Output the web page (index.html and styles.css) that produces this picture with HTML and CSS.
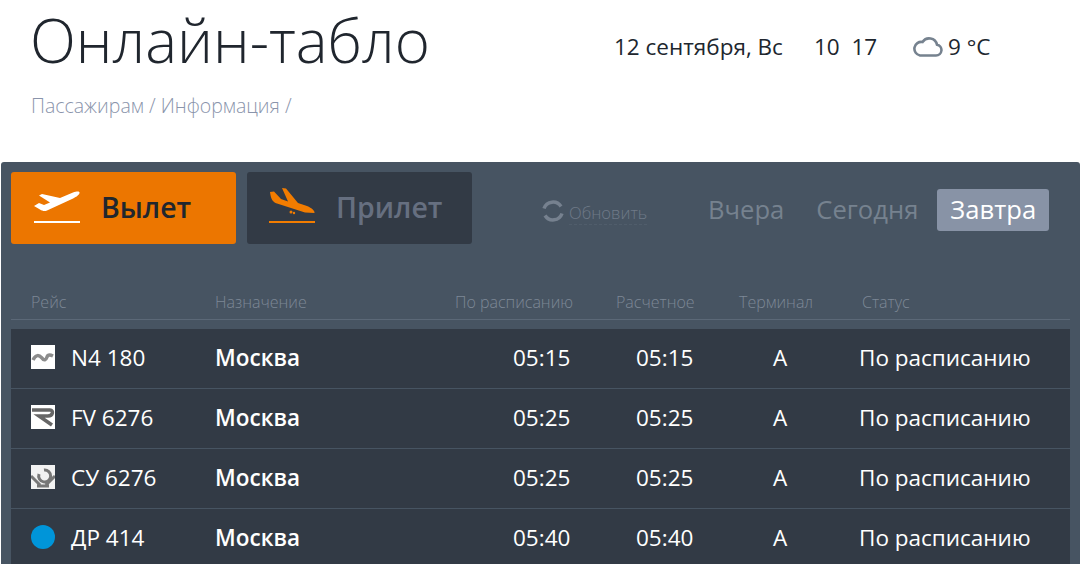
FILE: index.html
```html
<!DOCTYPE html>
<html lang="ru">
<head>
<meta charset="utf-8">
<title>Онлайн-табло</title>
<link rel="stylesheet" href="styles.css">
</head>
<body>
<header class="top">
  <div class="top-row">
    <h1 class="title">Онлайн-табло</h1>
    <div class="info">
      <span class="date">12 сентября, Вс</span>
      <span class="clock">10&nbsp;&nbsp;17</span>
      <span class="weather">
        <svg class="cloud" width="30" height="22" viewBox="0 0 30 22"><path d="M7 20.500H23a5.500 5.500 0 0 0 1-10.900A8 8 0 0 0 9.500 7 6.800 6.800 0 0 0 7 20.500z" fill="none" stroke="#76828f" stroke-width="2.600"/></svg>
        9 °C
      </span>
    </div>
  </div>
  <nav class="crumbs">Пассажирам / Информация /</nav>
</header>
<main class="board">
  <div class="toolbar">
    <a class="tab tab-on">
      <svg class="plane" width="46" height="40" viewBox="0 0 46 40"><path d="M0 18L5 15 10 17 16 14.500 5 7.500 8 6 26 10 39 4.500C43 3 46 3 45.500 5 45 7.500 41 9.500 38 11L13 22.500C11 23.500 8 23 6 21.500Z" fill="#fff"/><rect y="33" width="46" height="2" fill="#fff"/></svg>
      <span>Вылет</span>
    </a>
    <a class="tab tab-off">
      <svg class="plane" width="46" height="40" viewBox="0 0 46 40"><path d="M1 4L5 3.500 12 11 19 13.500 13 0 17 .5 29 15 38 18C43 20 46 23 45.500 25L36 24.500 8 15.500C4 14 2 12 1 4Z" fill="#f27c00"/><circle cx="22" cy="24" r="1.500" fill="#f27c00"/><circle cx="25" cy="25" r="1.200" fill="#f27c00"/><rect y="33" width="46" height="2" fill="#f27c00"/></svg>
      <span>Прилет</span>
    </a>
    <a class="refresh">
      <svg width="24" height="24" viewBox="0 0 24 24"><path d="M3 9.500A9.500 9.500 0 0 1 20 7.500M21 14.500A9.500 9.500 0 0 1 4 16.500" fill="none" stroke="#76818f" stroke-width="3.500"/></svg>
      <span class="refresh-text">Обновить</span>
    </a>
    <div class="days">
      <a class="day">Вчера</a>
      <a class="day">Сегодня</a>
      <a class="day day-on">Завтра</a>
    </div>
  </div>
  <div class="thead">
    <span>Рейс</span>
    <span>Назначение</span>
    <span>По расписанию</span>
    <span>Расчетное</span>
    <span>Терминал</span>
    <span>Статус</span>
  </div>
  <div class="rows">
    <div class="row">
      <svg class="logo" width="24" height="24" viewBox="0 0 24 24"><rect width="24" height="24" fill="#fff"/><path class="smudge" d="M2 15C5 9 8 10 11 13 13 16 15 15 16 12 17 9 20 10 22 11" fill="none" stroke="#8c8c8c" stroke-width="3.500"/></svg>
      <span class="flight">N4 180</span>
      <b class="dest">Москва</b>
      <span>05:15</span><span>05:15</span><span>A</span><span>По расписанию</span>
    </div>
    <div class="row">
      <svg class="logo" width="24" height="24" viewBox="0 0 24 24"><rect width="24" height="24" fill="#fff"/><path class="smudge" d="M1 5H19C23 5 22 11 17 11H8L21 20" fill="none" stroke="#666" stroke-width="3.500"/></svg>
      <span class="flight">FV 6276</span>
      <b class="dest">Москва</b>
      <span>05:25</span><span>05:25</span><span>A</span><span>По расписанию</span>
    </div>
    <div class="row">
      <svg class="logo" width="24" height="24" viewBox="0 0 24 24"><rect width="24" height="24" fill="#f2f2f2"/><path class="smudge" d="M0 11L9 20M24 11L15 20M6 21H18M13 5A6 6 0 1 1 8 9" fill="none" stroke="#777" stroke-width="3"/></svg>
      <span class="flight">СУ 6276</span>
      <b class="dest">Москва</b>
      <span>05:25</span><span>05:25</span><span>A</span><span>По расписанию</span>
    </div>
    <div class="row">
      <span class="logo dot"></span>
      <span class="flight">ДР 414</span>
      <b class="dest">Москва</b>
      <span>05:40</span><span>05:40</span><span>A</span><span>По расписанию</span>
    </div>
  </div>
</main>
</body>
</html>
```

FILE: styles.css
```css
* { box-sizing: border-box; }
html, body { margin: 0; padding: 0; height: 564px; overflow: hidden; background: #fff; }
body { font-family: "Open Sans", sans-serif; color: #20262e; }

.top { height: 162px; padding-left: 31px; }
.top-row { display: flex; align-items: flex-start; height: 90px; }
.title { margin: 0 0 0 -1px; width: 584px; font-size: 60px; font-weight: 300; line-height: 80px; color: #20262e; white-space: nowrap; }
.info { display: flex; align-items: center; height: 92px; font-size: 22.500px; }
.date { width: 200px; }
.clock { width: 98px; }
.weather { display: flex; align-items: center; gap: 5px; }
.cloud { display: block; margin-left: 1px; }
.crumbs { font-size: 19.500px; font-weight: 300; line-height: 28px; color: #8a94ab; padding-top: 2px; }

.board { margin-left: 1px; height: 402px; padding: 10px 10px 0; background: #475462; border-radius: 3px 3px 0 0; }
.toolbar { display: flex; align-items: center; height: 72px; }
.tab { display: flex; align-items: center; width: 225px; height: 72px; border-radius: 3px; padding-left: 23px; padding-bottom: 2px; font-size: 28.500px; font-weight: 600; }
.tab .plane { margin-right: 21px; display: block; margin-top: 2px; }
.tab-on { background: #ec7600; color: #20262e; margin-right: 11px; }
.tab-off { background: #323a45; color: #666f80; padding-left: 22px; }
.refresh { display: flex; align-items: center; margin-left: 69px; width: 154px; gap: 4px; margin-top: 6px; color: #6f7a88; }
.refresh svg { display: block; }
.refresh-text { font-size: 16.600px; font-weight: 300; border-bottom: 1px dashed #505d6b; line-height: 22px; margin-top: 4px; white-space: nowrap; }
.days { display: flex; align-items: center; font-size: 25.600px; color: #76828f; margin-top: 4px; }
.day { padding: 0 13px; height: 42px; line-height: 42px; border-radius: 3px; margin-right: 6px; white-space: nowrap; }
.day-on { background: #8893a6; color: #fff; margin-right: 0; }

.thead { display: grid; grid-template-columns: 184px 240px 161px 123px 123px 1fr; height: 76px; padding: 46px 0 0 20px; font-size: 16px; font-weight: 300; line-height: 24px; color: #7d8896; border-bottom: 1px solid #5b6877; }
.rows { margin-top: 9px; }
.row { display: grid; grid-template-columns: 40px 144px 298px 123px 137px 86px 1fr; align-items: center; height: 60px; padding: 0 0 3px 20px; background: #323a45; border-bottom: 1px solid #475462; color: #fff; font-size: 22.500px; white-space: nowrap; }
.logo { display: block; width: 24px; height: 24px; }
.smudge { filter: blur(0.6px); }
.dot { border-radius: 50%; background: #0095d9; }
.dest { font-weight: 600; }
```
